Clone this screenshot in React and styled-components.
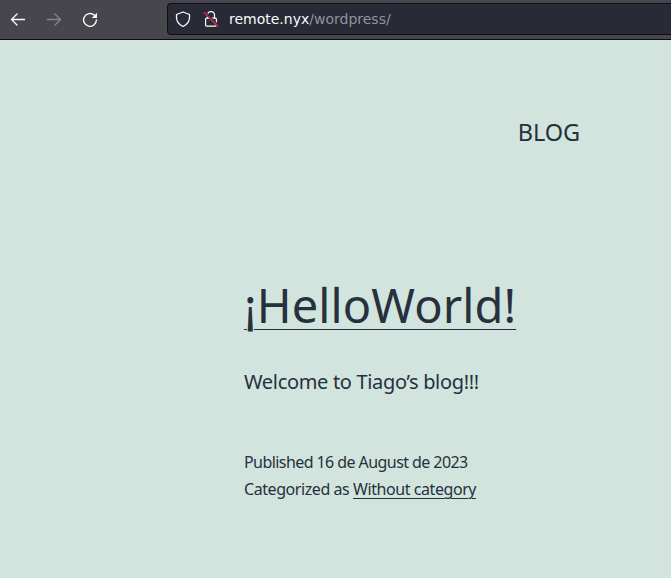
import React from 'react';
import styled, { createGlobalStyle } from 'styled-components';

const GlobalStyle = createGlobalStyle`
  * { box-sizing: border-box; }
  html, body { margin: 0; height: 100%; overflow: hidden; background: #d1e4dd; }
  body { font-family: "Noto Sans", sans-serif; color: #28303d; }
`;

const Toolbar = styled.header`
  display: flex;
  align-items: flex-start;
  height: 40px;
  padding-top: 3px;
  background: #46464c;
  border-bottom: 1px solid #0c0c0d;
`;

const Navigation = styled.nav`
  display: flex;
  width: 167px;
  padding: 8px 0 0 10px;
  gap: 20px;
`;

const ToolButton = styled.button`
  width: 16px;
  height: 16px;
  padding: 0;
  border: 0;
  background: none;
  color: ${({ $muted }) => ($muted ? '#87878b' : '#fbfbfe')};
  svg { display: block; }
`;

const AddressBar = styled.div`
  display: flex;
  flex: 1;
  align-items: center;
  height: 32px;
  padding-left: 7px;
  border: 1px solid #101015;
  border-right: 0;
  border-radius: 4px 0 0 4px;
  background: #282a36;
  color: #fbfbfe;
  svg { flex: none; margin-right: 12px; }
`;

const Address = styled.span`
  font: 14px/20px "DejaVu Sans", sans-serif;
  margin-left: -2px;
  white-space: nowrap;
`;

const Path = styled.span`
  color: #93949a;
`;

const SiteHeader = styled.div`
  display: flex;
  justify-content: flex-end;
  padding: 74px 91px 0 0;
`;

const MenuLink = styled.a`
  font-size: 23.5px;
  line-height: 36px;
  letter-spacing: -0.1px;
`;

const Article = styled.article`
  width: 400px;
  margin: 124px 0 0 244px;
`;

const Title = styled.h1`
  margin: 0;
  font-size: 47px;
  font-weight: 400;
  line-height: 62px;
  letter-spacing: 0.1px;
  white-space: nowrap;
`;

const Link = styled.a`
  text-decoration: underline;
  text-decoration-thickness: 1px;
  text-underline-offset: ${({ $offset }) => $offset};
`;

const Body = styled.p`
  margin: 29px 0 0;
  font-size: 20px;
  line-height: 34px;
  white-space: nowrap;
  letter-spacing: -0.33px;
`;

const Meta = styled.footer`
  margin-top: 50px;
  font-size: 16px;
  line-height: 27px;
  white-space: nowrap;
`;

const Line = styled.div`
  letter-spacing: ${({ $spacing }) => $spacing};
`;

function Arrow({ right }) {
  return (
    <svg width="16" height="16" viewBox="0 0 16 16" fill="none" stroke="currentColor" strokeWidth="1.3" strokeLinecap="round" strokeLinejoin="round">
      <path d={right ? 'M1.5 8.5H14.4M9 3l5.5 5.5L9 14' : 'M14.5 8.5H1.6M7 3L1.5 8.5L7 14'} />
    </svg>
  );
}

function Reload() {
  return (
    <svg width="16" height="16" viewBox="0 0 16 16" fill="none" stroke="currentColor" strokeWidth="1.4" strokeLinecap="round">
      <path d="M12.2 4.1A6.4 6.4 0 1 0 14.4 9" />
      <path d="M15 1.8V6.9H9.9Z" fill="currentColor" stroke="none" />
    </svg>
  );
}

function Shield() {
  return (
    <svg width="16" height="16" viewBox="0 0 16 16" fill="none" stroke="currentColor" strokeWidth="1.25" strokeLinejoin="round">
      <path d="M8 1L14.5 3.5V6.5C14.5 10.6 12 13.6 8 15.5C4 13.6 1.5 10.6 1.5 6.5V3.5Z" />
    </svg>
  );
}

function InsecureLock() {
  return (
    <svg width="16" height="16" viewBox="0 0 16 16" fill="none" stroke="currentColor" strokeWidth="1.25">
      <path d="M4.5 7.2V4a3.5 3.5 0 0 1 7 0V7.2" />
      <rect x="2.6" y="7.2" width="10.8" height="7.9" rx="1" />
      <path d="M2.5 2L15 14.5" stroke="#282a36" strokeWidth="2.4" />
      <path d="M1.3 1.8L14.5 15" stroke="#e22850" strokeWidth="1.4" strokeLinecap="round" />
    </svg>
  );
}

export default function App() {
  return (
    <>
      <GlobalStyle />
      <Toolbar>
        <Navigation>
          <ToolButton aria-label="Back"><Arrow /></ToolButton>
          <ToolButton $muted aria-label="Forward"><Arrow right /></ToolButton>
          <ToolButton aria-label="Reload"><Reload /></ToolButton>
        </Navigation>
        <AddressBar>
          <Shield />
          <InsecureLock />
          <Address>remote.nyx<Path>/wordpress/</Path></Address>
        </AddressBar>
      </Toolbar>
      <main>
        <SiteHeader><MenuLink>BLOG</MenuLink></SiteHeader>
        <Article>
          <Title><Link $offset="6px">¡HelloWorld!</Link></Title>
          <Body>Welcome to Tiago’s blog!!!</Body>
          <Meta>
            <Line $spacing="-0.57px">Published 16 de August de 2023</Line>
            <Line $spacing="-0.43px">Categorized as <Link $offset="3px">Without category</Link></Line>
          </Meta>
        </Article>
      </main>
    </>
  );
}
